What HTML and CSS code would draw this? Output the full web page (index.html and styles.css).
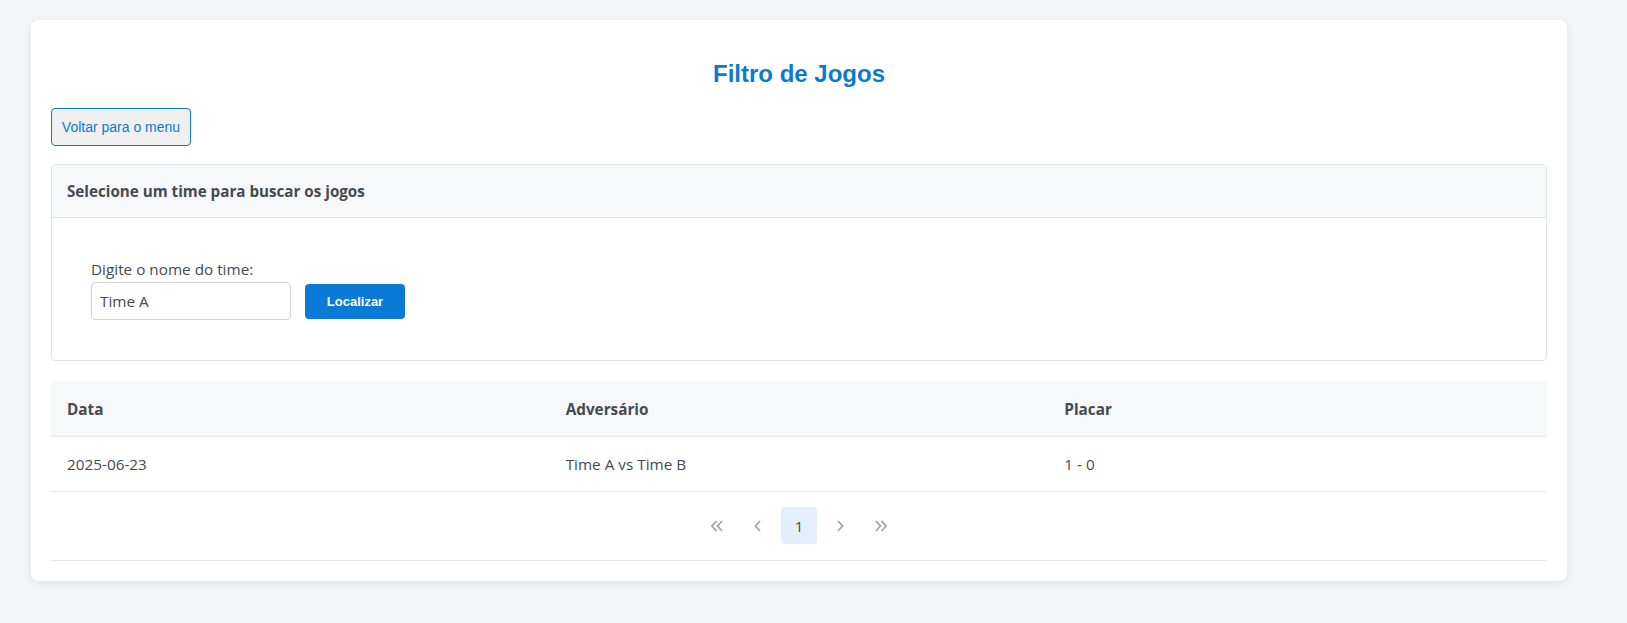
FILE: index.html
```html
<!DOCTYPE html>
<html lang="pt">
<head>
<meta charset="utf-8">
<title>Filtro de Jogos</title>
<link rel="stylesheet" href="styles.css">
</head>
<body>
<div class="card">
  <h2 class="title">Filtro de Jogos</h2>
  <button class="back-btn">Voltar para o menu</button>
  <div class="panel">
    <div class="panel-header">Selecione um time para buscar os jogos</div>
    <div class="panel-body">
      <label class="field-label" for="team">Digite o nome do time:</label>
      <div class="field-row">
        <input id="team" class="text-input" type="text" value="Time A">
        <button class="primary-btn">Localizar</button>
      </div>
    </div>
  </div>
  <div class="grid">
    <div class="grid-row grid-head">
      <div class="cell">Data</div>
      <div class="cell">Adversário</div>
      <div class="cell">Placar</div>
    </div>
    <div class="grid-row">
      <div class="cell">2025-06-23</div>
      <div class="cell">Time A vs Time B</div>
      <div class="cell">1 - 0</div>
    </div>
    <div class="pager">
      <span class="pg-btn"><svg width="14" height="12" viewBox="0 0 14 12"><path d="M6.5 1 L2 6 L6.5 11 M12 1 L7.5 6 L12 11" fill="none" stroke="#a0a4a8" stroke-width="1.8"/></svg></span>
      <span class="pg-btn"><svg width="8" height="12" viewBox="0 0 8 12"><path d="M6 1 L1.5 6 L6 11" fill="none" stroke="#a0a4a8" stroke-width="1.8"/></svg></span>
      <span class="pg-btn pg-active">1</span>
      <span class="pg-btn"><svg width="8" height="12" viewBox="0 0 8 12"><path d="M2 1 L6.5 6 L2 11" fill="none" stroke="#a0a4a8" stroke-width="1.8"/></svg></span>
      <span class="pg-btn"><svg width="14" height="12" viewBox="0 0 14 12"><path d="M2 1 L6.5 6 L2 11 M7.5 1 L12 6 L7.5 11" fill="none" stroke="#a0a4a8" stroke-width="1.8"/></svg></span>
    </div>
  </div>
</div>
</body>
</html>
```

FILE: styles.css
```css
* { box-sizing: border-box; }
html, body { margin: 0; padding: 0; }
body {
  background: #f3f6f9;
  font-family: "Open Sans", "Noto Sans", sans-serif;
  color: #454a50;
  padding: 20px 0 40px 31px;
}
.card {
  width: 1536px;
  background: #fff;
  border-radius: 8px;
  box-shadow: 0 2px 8px rgba(0, 0, 0, 0.09);
  padding: 20px;
}
.title {
  margin: 20px 0 20px;
  text-align: center;
  font-family: "Liberation Sans", Arial, sans-serif;
  font-size: 24px;
  line-height: 28px;
  font-weight: bold;
  color: #0b79d6;
}
.back-btn {
  display: block;
  height: 38px;
  width: 140px;
  padding: 0;
  background: #f0f0f0;
  color: #0b79d6;
  border: 1px solid #0b79d6;
  border-radius: 4px;
  font-family: "Liberation Sans", Arial, sans-serif;
  font-size: 14px;
  margin: 0 0 18px;
}
.panel {
  border: 1px solid #dee1e6;
  border-radius: 4px;
}
.panel-header {
  background: #f7f8fa;
  border-bottom: 1px solid #dee1e6;
  height: 53px;
  padding: 0 15px;
  display: flex;
  align-items: center;
  font-weight: bold;
  font-size: 15.2px;
}
.panel-body {
  padding: 40px 39px 40px;
}
.field-label {
  display: block;
  font-size: 15.3px;
  line-height: 22px;
  margin-bottom: 2px;
}
.field-row {
  display: flex;
  align-items: center;
  gap: 14px;
}
.text-input {
  width: 200px;
  height: 38px;
  border: 1px solid #cfd3d8;
  border-radius: 4px;
  padding: 0 8px;
  font-family: "Open Sans", "Noto Sans", sans-serif;
  font-size: 15.3px;
  color: #454a50;
}
.primary-btn {
  width: 100px;
  height: 35px;
  background: #0b79d6;
  color: #fff;
  border: 0;
  border-radius: 4px;
  font-family: "Liberation Sans", Arial, sans-serif;
  font-size: 13px;
  font-weight: bold;
}
.grid { margin-top: 20px; }
.grid-row {
  display: grid;
  grid-template-columns: 1fr 1fr 1fr;
  border-bottom: 1px solid #e6e8eb;
  height: 55px;
  align-items: center;
  font-size: 15.3px;
}
.grid-head {
  background: #f7f8fa;
  font-weight: bold;
  height: 56px;
}
.cell { padding: 0 16px; }
.pager {
  display: flex;
  justify-content: center;
  align-items: center;
  gap: 5px;
  padding: 15px 0 16px;
  border-bottom: 1px solid #e6e8eb;
}
.pg-btn {
  width: 36px;
  height: 37px;
  display: flex;
  align-items: center;
  justify-content: center;
  border-radius: 4px;
  font-size: 15px;
}
.pg-active {
  background: #e3f0fc;
  color: #454a50;
}
```
